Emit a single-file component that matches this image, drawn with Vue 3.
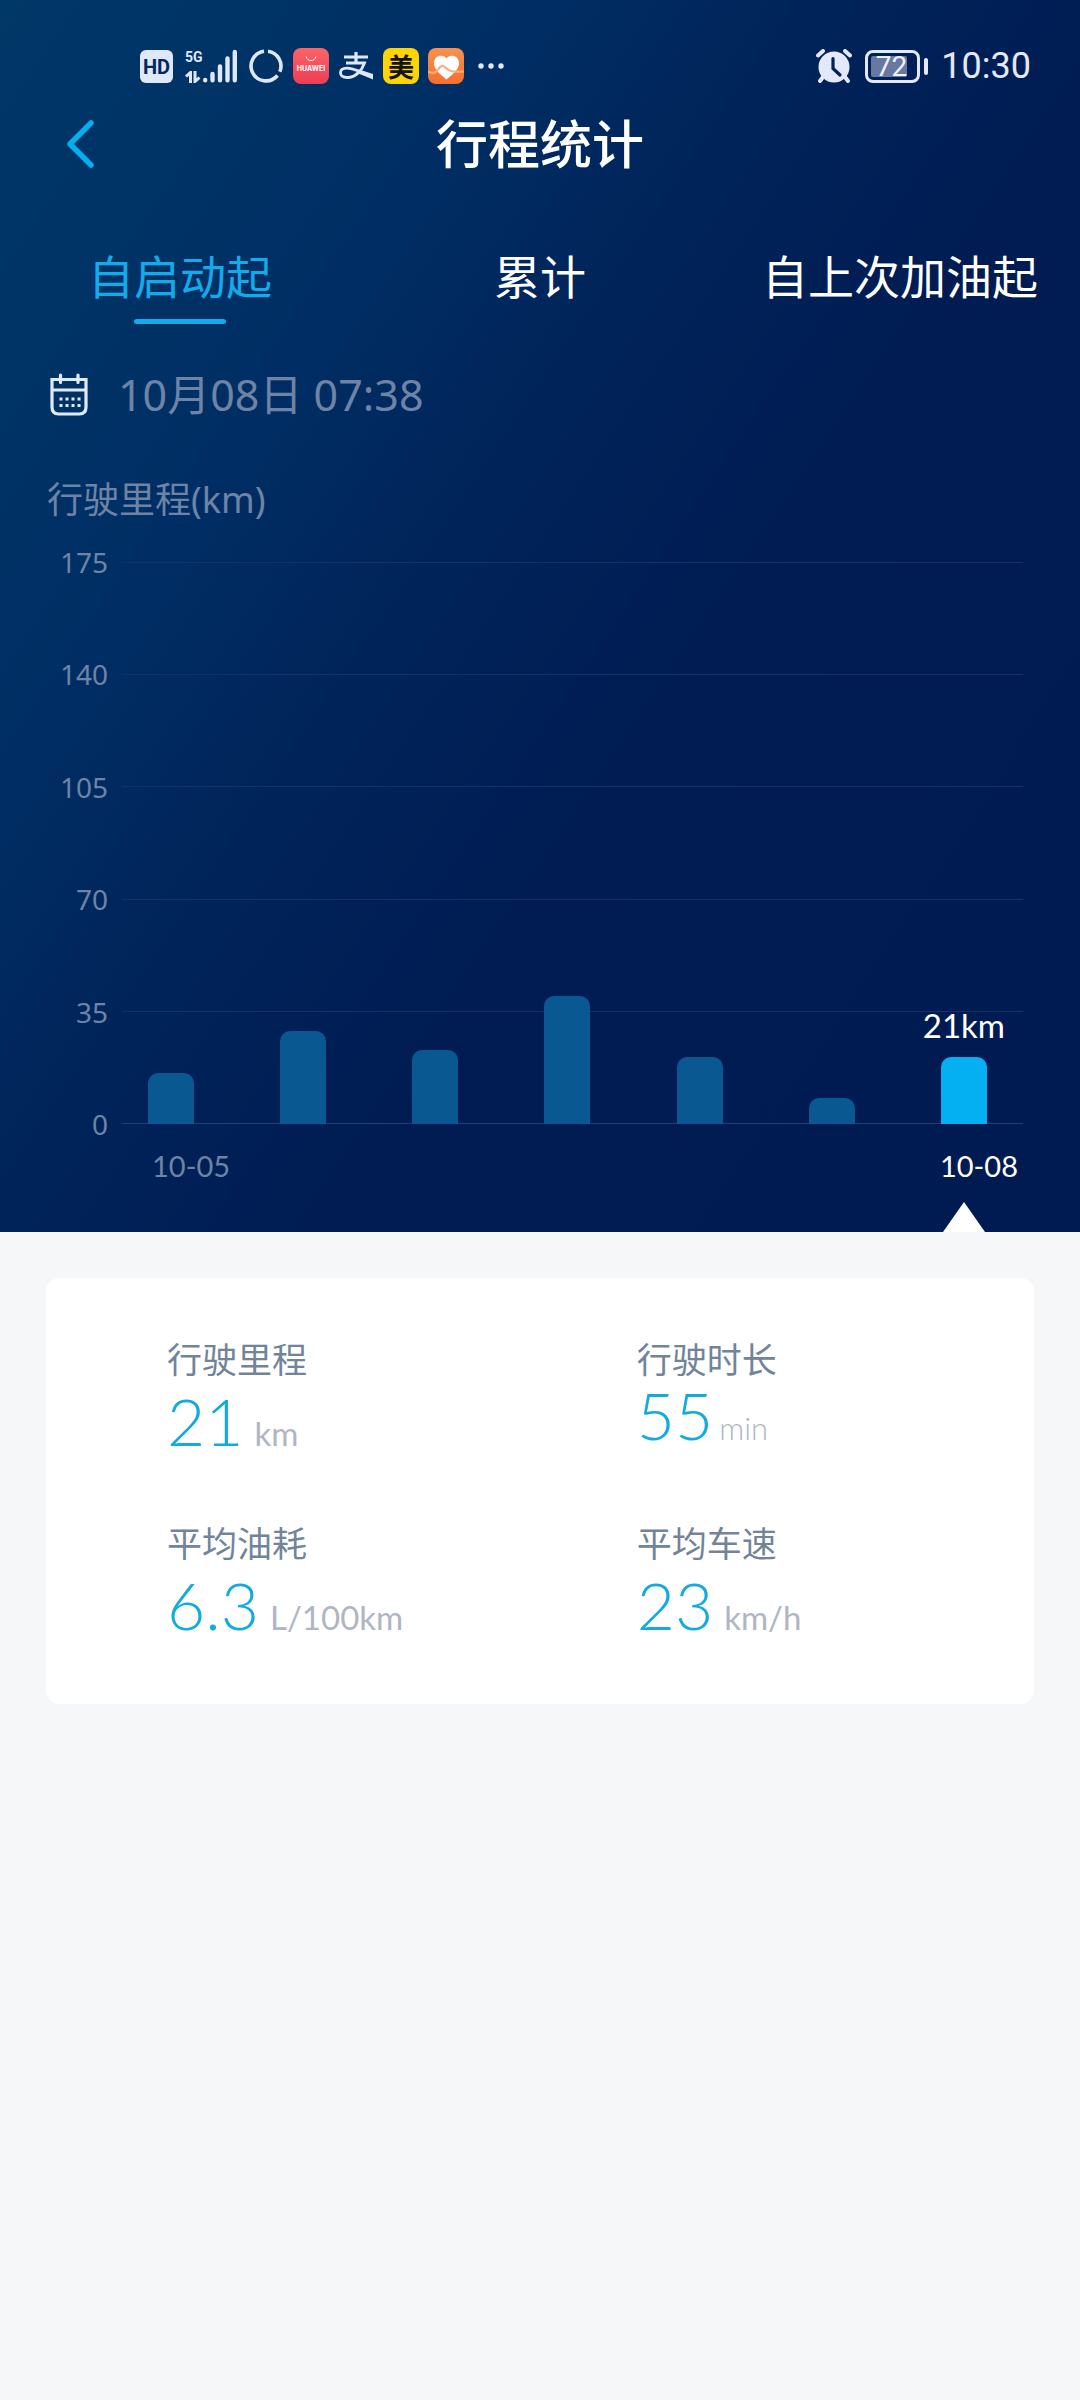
<script setup>
import { ref } from 'vue'

const tabs = ['自启动起', '累计', '自上次加油起']
const activeTab = ref(0)

const scaleMax = 175
const ticks = [175, 140, 105, 70, 35, 0]

const trips = [16, 29, 23, 40, 21, 8, 21]
const selected = ref(6)

const stats = [
  { label: '行驶里程', value: '21', unit: 'km' },
  { label: '行驶时长', value: '55', unit: 'min', compact: true },
  { label: '平均油耗', value: '6.3', unit: 'L/100km' },
  { label: '平均车速', value: '23', unit: 'km/h' },
]
</script>

<template>
  <div class="page">
    <section class="hero">
      <div class="status">
        <div class="status-left">
          <span class="hd">HD</span>
          <span class="network">
            <span class="network-type">
              <span class="gen">5G</span>
              <svg width="16" height="12" viewBox="0 0 16 12" fill="none" stroke="#dfe7fb" stroke-width="3">
                <path d="M1 5.500L5.500 1.500V12M10 0V10.500L14.500 6.500" />
              </svg>
            </span>
            <svg width="34" height="34" viewBox="0 0 34 34" fill="none" stroke="#dfe7fb" stroke-width="4.400" stroke-linecap="round">
              <path d="M2.200 31V31.300M9.500 25V31.300M17 17.500V31.300M24.500 9.500V31.300M31.800 3V31.300" />
            </svg>
          </span>
          <svg class="ring" width="36" height="36" viewBox="0 0 36 36" fill="none" stroke="#dfe7fb" stroke-width="3.600">
            <path d="M20 3.200A15 15 0 0 1 31.800 23.800M29.500 27.500A15 15 0 0 1 4.200 23.800A15 15 0 0 1 16 3.200" />
          </svg>
          <span class="app huawei">
            <svg width="12" height="7" viewBox="0 0 12 7" fill="none" stroke="#fff" stroke-width="1">
              <path d="M1 0.500C2.500 6 9.500 6 11 0.500" />
            </svg>
            <span>HUAWEI</span>
          </span>
          <svg class="alipay" width="34" height="28" viewBox="0 0 34 28" fill="none" stroke="#dfe7fb">
            <path d="M5 5H29M17 0V11" stroke-width="3.200" />
            <path d="M7 11H25.500C23 18 17 25.500 8.500 25.500C4 25.500 1.500 23.500 1.500 20.800C1.500 18 4 16.200 8 16.200C15 16.200 23 21 33 24" stroke-width="2.800" />
            <path d="M20 17.500L34 22L34 27.500L17 20.500Z" fill="#dfe7fb" stroke="none" />
          </svg>
          <span class="app meituan">美</span>
          <svg width="36" height="36" viewBox="0 0 36 36">
            <defs>
              <linearGradient id="health" x1="0" y1="0" x2="0" y2="1">
                <stop offset="0" stop-color="#f79250" />
                <stop offset="1" stop-color="#f56f2c" />
              </linearGradient>
            </defs>
            <rect width="36" height="36" rx="8" fill="url(#health)" />
            <path d="M18.500 10.500C15.500 6 6 7 6 15.500C6 22 14 27.500 18.500 31.500C23 27.500 31 22 31 15.500C31 7 21.500 6 18.500 10.500Z" fill="#fff" />
            <path d="M0 23.500C5 25.500 7 25.500 10 21.500C13 17.500 15 16.500 18 20C21 23.500 25 24 36 23.500" fill="none" stroke="#f9b183" stroke-width="2.200" />
          </svg>
          <svg width="26" height="36" viewBox="0 0 26 36" fill="#dfe7fb">
            <circle cx="3" cy="18" r="2.700" />
            <circle cx="13" cy="18" r="2.700" />
            <circle cx="23" cy="18" r="2.700" />
          </svg>
        </div>
        <div class="status-right">
          <svg width="36" height="34" viewBox="0 0 36 34">
            <circle cx="18" cy="18" r="15.500" fill="#e3e9f8" />
            <path d="M2 6.500L7 2M34 6.500L29 2M7 28L4 32M29 28L32 32" stroke="#e3e9f8" stroke-width="4" stroke-linecap="round" />
            <path d="M17 9.500V19.500L24 26" fill="none" stroke="#00225b" stroke-width="3.200" stroke-linecap="round" />
          </svg>
          <span class="battery">
            <span class="battery-body"><span>72</span></span>
            <span class="battery-cap"></span>
          </span>
          <span class="clock">10:30</span>
        </div>
      </div>

      <header class="bar">
        <button class="back" type="button" aria-label="返回">
          <svg width="28" height="48" viewBox="0 0 28 48" fill="none" stroke="#06aef0" stroke-width="5.500" stroke-linecap="round" stroke-linejoin="round">
            <path d="M25 3L4 24L25 45" />
          </svg>
        </button>
        <h1>行程统计</h1>
      </header>

      <nav class="tabs">
        <button
          v-for="(tab, i) in tabs"
          :key="tab"
          type="button"
          class="tab"
          :class="{ active: i === activeTab }"
          @click="activeTab = i"
        >
          {{ tab }}
        </button>
      </nav>

      <button class="date" type="button">
        <svg width="38" height="44" viewBox="0 0 38 44" fill="none" stroke="#dfeafa" stroke-width="3.200">
          <path d="M2 6.500H36V34C36 38.500 34 41 29.500 41H8.500C4 41 2 38.500 2 34ZM2 17H36" />
          <path d="M10.500 2V9.500M28 2V9.500" stroke-linecap="round" />
          <path d="M9.500 26H30.500M9.500 32.500H30.500" stroke-dasharray="3 3" />
        </svg>
        <span>10月08日 07:38</span>
      </button>

      <h2>行驶里程(km)</h2>

      <div class="chart">
        <ul class="scale">
          <li v-for="tick in ticks" :key="tick">{{ tick }}</li>
        </ul>
        <div class="bars">
          <div
            v-for="(km, i) in trips"
            :key="i"
            class="column"
            :class="{ selected: i === selected }"
          >
            <span v-if="i === selected" class="tip">{{ km }}km</span>
            <div class="fill" :style="{ height: (km / scaleMax) * 100 + '%' }"></div>
          </div>
        </div>
      </div>
      <div class="days">
        <span>10-05</span>
        <span class="today">10-08</span>
      </div>
      <div class="pointer"></div>
    </section>

    <dl class="card">
      <div v-for="stat in stats" :key="stat.label" class="stat" :class="{ compact: stat.compact }">
        <dt>{{ stat.label }}</dt>
        <dd><span class="value">{{ stat.value }}</span><span class="unit">{{ stat.unit }}</span></dd>
      </div>
    </dl>
  </div>
</template>

<style>
body {
  background: #f5f7f9;
}
</style>

<style scoped>
.page {
  min-height: 100vh;
  background: #f5f7f9;
  font-family: "Noto Sans", "Noto Sans CJK SC", sans-serif;
}

.page * {
  box-sizing: border-box;
}

button {
  padding: 0;
  border: 0;
  background: none;
  font: inherit;
  cursor: pointer;
}

svg {
  display: block;
  flex: none;
}

h1,
h2,
ul,
dl,
dd {
  margin: 0;
  padding: 0;
}

.hero {
  display: flex;
  flex-direction: column;
  background: linear-gradient(124deg, #003868 0%, #002e64 28%, #002359 44%, #001c53 60%, #001b51 100%);
}

/* Status bar */
.status {
  display: flex;
  justify-content: space-between;
  align-items: center;
  height: 48px;
  margin-top: 42px;
  padding: 0 49px 0 140px;
}

.status-left,
.status-right {
  display: flex;
  align-items: center;
}

.status-left {
  gap: 9px;
}

.hd {
  width: 33px;
  height: 33px;
  margin-right: 3px;
  border-radius: 6px;
  background: #dfe7fb;
  color: #00285f;
  font: 700 20px/34px Roboto, sans-serif;
  text-align: center;
}

.network {
  display: flex;
  gap: 1px;
}

.network-type {
  width: 17px;
}

.gen {
  display: block;
  height: 22px;
  color: #dfe7fb;
  font: 700 14px/16px Roboto, sans-serif;
}

.ring {
  margin-left: 2px;
}

.app {
  display: flex;
  flex-direction: column;
  align-items: center;
  width: 36px;
  height: 36px;
  border-radius: 8px;
}

.huawei {
  padding-top: 8px;
  background: linear-gradient(#fb6467, #ee3d55);
  color: #fff;
  font: 700 7px/12px Inter, sans-serif;
}

.alipay {
  margin: 0 1px;
}

.meituan {
  background: #fdd504;
  color: #141414;
  font: 700 26px/36px "Noto Sans CJK SC", sans-serif;
}

.status-left > svg:last-child {
  margin-left: 5px;
}

.status-right {
  gap: 13px;
}

.battery {
  display: flex;
  align-items: center;
  gap: 4px;
}

.battery-body {
  width: 55px;
  height: 33px;
  padding: 3px;
  border: 3px solid #e3e9f8;
  border-radius: 8px;
}

.battery-body span {
  display: block;
  width: 36px;
  height: 21px;
  border-radius: 2px;
  background: #6778a3;
  color: #eef2fc;
  font: 400 28px/21px Roboto, sans-serif;
  text-align: right;
}

.battery-cap {
  width: 4px;
  height: 17px;
  border-radius: 2px;
  background: #e3e9f8;
}

.clock {
  color: #e3e9f8;
  font: 400 36px/48px Roboto, sans-serif;
}

/* Title bar */
.bar {
  display: grid;
  grid-template-columns: 1fr auto 1fr;
  align-items: center;
  height: 108px;
  padding: 0 66px;
}

.back {
  justify-self: start;
}

h1 {
  color: #fff;
  font-size: 52px;
  font-weight: 500;
  line-height: 70px;
}

/* Tabs */
.tabs {
  display: grid;
  grid-template-columns: repeat(3, 1fr);
  padding-top: 48px;
}

.tab {
  display: flex;
  flex-direction: column;
  align-items: center;
  gap: 13px;
  color: #fff;
  font-size: 46px;
  line-height: 60px;
  white-space: nowrap;
}

.tab::after {
  content: "";
  width: 92px;
  height: 5px;
  border-radius: 3px;
}

.tab.active {
  color: #12abec;
}

.tab.active::after {
  background: #12abec;
}

.date {
  display: flex;
  align-items: center;
  align-self: flex-start;
  gap: 30px;
  margin: 41px 50px 0;
  color: #6d84a6;
  font-size: 43px;
  line-height: 60px;
}

h2 {
  margin: 50px 47px 17px;
  color: #6d84a6;
  font-size: 36px;
  font-weight: 400;
  line-height: 50px;
}

/* Chart: scale rows and bars share one grid cell */
.chart {
  display: grid;
  height: 602px;
}

.scale,
.bars {
  grid-area: 1 / 1;
}

.scale {
  display: flex;
  flex-direction: column;
  justify-content: space-between;
  padding: 0 57px 0 52px;
  list-style: none;
}

.scale li {
  display: grid;
  grid-template-columns: 56px 1fr;
  align-items: center;
  gap: 14px;
  height: 40px;
  color: #6d84a6;
  font-size: 28px;
  line-height: 38px;
  text-align: right;
}

.scale li::after {
  content: "";
  height: 1px;
  background: #14316a;
}

.scale li:last-child::after {
  background: #20407a;
}

.bars {
  display: grid;
  grid-template-columns: repeat(7, 1fr);
  padding: 20px 50px 20px 105px;
}

.column {
  display: flex;
  flex-direction: column;
  justify-content: flex-end;
  align-items: center;
  height: 100%;
}

.fill {
  flex: none;
  width: 46px;
  border-radius: 10px 10px 0 0;
  background: #0a5891;
}

.selected .fill {
  background: #04aff2;
}

.tip {
  margin-bottom: 12px;
  color: #fff;
  font: 400 33px/40px Lato, sans-serif;
}

.days {
  display: flex;
  justify-content: space-between;
  padding: 2px 62px 0 152px;
  color: #6d84a6;
  font: 400 29px/40px Lato, sans-serif;
}

.today {
  color: #fff;
}

.pointer {
  align-self: flex-end;
  width: 42px;
  height: 30px;
  margin: 16px 95px 0;
  background: #fff;
  clip-path: polygon(50% 0, 100% 100%, 0 100%);
}

/* Trip details */
.card {
  display: grid;
  grid-template-columns: 13fr 11fr;
  row-gap: 50px;
  margin: 46px;
  padding: 62px 0 46px 121px;
  border-radius: 14px;
  background: #fff;
}

.stat {
  height: 134px;
}

dt {
  color: #72849a;
  font-size: 35px;
  line-height: 40px;
}

dd {
  display: flex;
  align-items: baseline;
  gap: 11px;
  font-family: Lato, sans-serif;
  line-height: 82px;
}

.value {
  color: #12abe0;
  font-size: 66px;
  font-weight: 300;
}

.unit {
  color: #b0b5c3;
  font-size: 33px;
}

.compact dd {
  gap: 6px;
  line-height: 70px;
}

.compact .unit {
  font-size: 31px;
  font-weight: 300;
}
</style>
